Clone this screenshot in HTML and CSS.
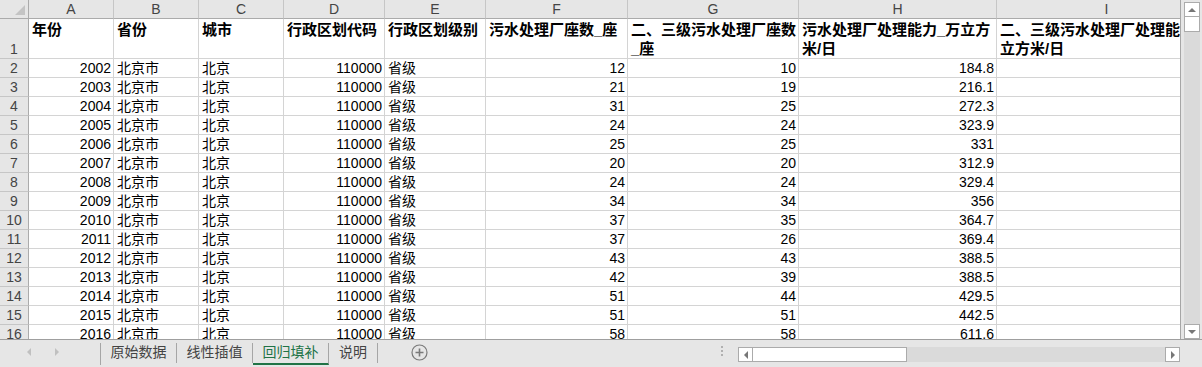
FILE: index.html
```html
<!DOCTYPE html>
<html lang="zh-CN">
<head>
<meta charset="utf-8">
<title>Sheet</title>
<link rel="stylesheet" href="styles.css">
</head>
<body>
<div class="app">
  <div class="main">
    <div class="sheet">
      <div class="grid">
        <div class="c corner"></div>
        <div class="c ch">A</div><div class="c ch">B</div><div class="c ch">C</div><div class="c ch">D</div><div class="c ch">E</div><div class="c ch">F</div><div class="c ch">G</div><div class="c ch">H</div><div class="c ch">I</div>

        <div class="c rh rh1">1</div>
        <div class="c hd">年份</div><div class="c hd">省份</div><div class="c hd">城市</div><div class="c hd">行政区划代码</div><div class="c hd">行政区划级别</div><div class="c hd">污水处理厂座数_座</div><div class="c hd">二、三级污水处理厂座数<br>_座</div><div class="c hd">污水处理厂处理能力_万立方<br>米/日</div><div class="c hd">二、三级污水处理厂处理能力_万<br>立方米/日</div>

        <div class="c rh">2</div><div class="c n">2002</div><div class="c">北京市</div><div class="c">北京</div><div class="c n">110000</div><div class="c">省级</div><div class="c n">12</div><div class="c n">10</div><div class="c n">184.8</div><div class="c"></div>
        <div class="c rh">3</div><div class="c n">2003</div><div class="c">北京市</div><div class="c">北京</div><div class="c n">110000</div><div class="c">省级</div><div class="c n">21</div><div class="c n">19</div><div class="c n">216.1</div><div class="c"></div>
        <div class="c rh">4</div><div class="c n">2004</div><div class="c">北京市</div><div class="c">北京</div><div class="c n">110000</div><div class="c">省级</div><div class="c n">31</div><div class="c n">25</div><div class="c n">272.3</div><div class="c"></div>
        <div class="c rh">5</div><div class="c n">2005</div><div class="c">北京市</div><div class="c">北京</div><div class="c n">110000</div><div class="c">省级</div><div class="c n">24</div><div class="c n">24</div><div class="c n">323.9</div><div class="c"></div>
        <div class="c rh">6</div><div class="c n">2006</div><div class="c">北京市</div><div class="c">北京</div><div class="c n">110000</div><div class="c">省级</div><div class="c n">25</div><div class="c n">25</div><div class="c n">331</div><div class="c"></div>
        <div class="c rh">7</div><div class="c n">2007</div><div class="c">北京市</div><div class="c">北京</div><div class="c n">110000</div><div class="c">省级</div><div class="c n">20</div><div class="c n">20</div><div class="c n">312.9</div><div class="c"></div>
        <div class="c rh">8</div><div class="c n">2008</div><div class="c">北京市</div><div class="c">北京</div><div class="c n">110000</div><div class="c">省级</div><div class="c n">24</div><div class="c n">24</div><div class="c n">329.4</div><div class="c"></div>
        <div class="c rh">9</div><div class="c n">2009</div><div class="c">北京市</div><div class="c">北京</div><div class="c n">110000</div><div class="c">省级</div><div class="c n">34</div><div class="c n">34</div><div class="c n">356</div><div class="c"></div>
        <div class="c rh">10</div><div class="c n">2010</div><div class="c">北京市</div><div class="c">北京</div><div class="c n">110000</div><div class="c">省级</div><div class="c n">37</div><div class="c n">35</div><div class="c n">364.7</div><div class="c"></div>
        <div class="c rh">11</div><div class="c n">2011</div><div class="c">北京市</div><div class="c">北京</div><div class="c n">110000</div><div class="c">省级</div><div class="c n">37</div><div class="c n">26</div><div class="c n">369.4</div><div class="c"></div>
        <div class="c rh">12</div><div class="c n">2012</div><div class="c">北京市</div><div class="c">北京</div><div class="c n">110000</div><div class="c">省级</div><div class="c n">43</div><div class="c n">43</div><div class="c n">388.5</div><div class="c"></div>
        <div class="c rh">13</div><div class="c n">2013</div><div class="c">北京市</div><div class="c">北京</div><div class="c n">110000</div><div class="c">省级</div><div class="c n">42</div><div class="c n">39</div><div class="c n">388.5</div><div class="c"></div>
        <div class="c rh">14</div><div class="c n">2014</div><div class="c">北京市</div><div class="c">北京</div><div class="c n">110000</div><div class="c">省级</div><div class="c n">51</div><div class="c n">44</div><div class="c n">429.5</div><div class="c"></div>
        <div class="c rh">15</div><div class="c n">2015</div><div class="c">北京市</div><div class="c">北京</div><div class="c n">110000</div><div class="c">省级</div><div class="c n">51</div><div class="c n">51</div><div class="c n">442.5</div><div class="c"></div>
        <div class="c rh">16</div><div class="c n">2016</div><div class="c">北京市</div><div class="c">北京</div><div class="c n">110000</div><div class="c">省级</div><div class="c n">58</div><div class="c n">58</div><div class="c n">611.6</div><div class="c"></div>
      </div>
    </div>
    <div class="vscroll">
      <div class="sbtn up"><span class="tri-up"></span></div>
      <div class="vthumb"></div>
      <div class="vtrack"></div>
      <div class="sbtn down"><span class="tri-down"></span></div>
    </div>
  </div>
  <div class="tabbar">
    <div class="nav">
      <span class="tri-left"></span>
      <span class="tri-right"></span>
    </div>
    <div class="tabs">
      <div class="tab">原始数据</div>
      <div class="tab">线性插值</div>
      <div class="tab active">回归填补</div>
      <div class="tab short">说明</div>
    </div>
    <div class="add">
      <svg width="17" height="17" viewBox="0 0 17 17"><circle cx="8.5" cy="8.5" r="7.5" fill="none" stroke="#7a7a7a" stroke-width="1.2"/><path d="M8.5 4.5v8M4.5 8.5h8" stroke="#7a7a7a" stroke-width="1.6"/></svg>
    </div>
    <div class="spacer"></div>
    <div class="dots"><i></i><i></i><i></i></div>
    <div class="hscroll">
      <div class="hbtn"><span class="tri-left dark"></span></div>
      <div class="hthumb"></div>
      <div class="htrack"></div>
      <div class="hbtn"><span class="tri-right dark"></span></div>
    </div>
  </div>
</div>
</body>
</html>
```

FILE: styles.css
```css
html, body {
  margin: 0;
  padding: 0;
}
body {
  width: 1202px;
  height: 367px;
  overflow: hidden;
  background: #e6e6e6;
  font-family: "Liberation Sans", "Noto Sans CJK SC", sans-serif;
  font-size: 14px;
  color: #000;
}
.app {
  display: flex;
  flex-direction: column;
  width: 1202px;
  height: 367px;
}
.main {
  display: flex;
  height: 339px;
}
.sheet {
  width: 1180px;
  height: 339px;
  overflow: hidden;
  background: #fff;
  border-right: 1px solid #a6a6a6;
}
.grid {
  display: grid;
  grid-template-columns: 29px 85px 85px 85px 101px 101px 142px 171px 198px 220px;
  grid-template-rows: 19px 40px repeat(15, 19px);
}
.c {
  box-sizing: border-box;
  border-right: 1px solid #d4d4d4;
  border-bottom: 1px solid #d4d4d4;
  line-height: 18px;
  padding: 0 3px;
  white-space: nowrap;
  overflow: hidden;
}
.n {
  text-align: right;
  padding: 0 2px 0 0;
}
.ch {
  background: #e6e6e6;
  color: #444;
  text-align: center;
  border-right-color: #c6c6c6;
  border-bottom-color: #ababab;
}
.rh {
  background: #e6e6e6;
  color: #444;
  text-align: center;
  padding: 0;
  border-right-color: #ababab;
  border-bottom-color: #c6c6c6;
}
.rh1 {
  display: flex;
  align-items: flex-end;
  justify-content: center;
}
.corner {
  background: #e6e6e6;
  border-right-color: #ababab;
  border-bottom-color: #ababab;
  display: flex;
  justify-content: flex-end;
  align-items: flex-end;
  padding: 0 3px 3px 0;
}
.corner::after {
  content: "";
  width: 0;
  height: 0;
  border-left: 10px solid transparent;
  border-bottom: 10px solid #c4c4c4;
}
.hd {
  font-weight: bold;
  font-size: 15px;
  line-height: 19px;
  padding-top: 1px;
  padding-left: 3px;
}

/* vertical scrollbar */
.vscroll {
  width: 21px;
  display: flex;
  flex-direction: column;
  box-sizing: border-box;
  padding: 2px 2px 0 3px;
  background: #e6e6e6;
}
.sbtn {
  height: 15px;
  box-sizing: border-box;
  background: #fff;
  border: 1px solid #ababab;
  display: flex;
  align-items: center;
  justify-content: center;
}
.vthumb {
  height: 15px;
  box-sizing: border-box;
  background: #fff;
  border: 1px solid #ababab;
  border-top: none;
}
.vtrack {
  flex: 1;
  background: #dadada;
}
.down {
  height: 15px;
}
.tri-up {
  width: 0; height: 0;
  border-left: 4px solid transparent;
  border-right: 4px solid transparent;
  border-bottom: 4px solid #777;
}
.tri-down {
  width: 0; height: 0;
  border-left: 4px solid transparent;
  border-right: 4px solid transparent;
  border-top: 4px solid #777;
}
.tri-left {
  width: 0; height: 0;
  border-top: 4px solid transparent;
  border-bottom: 4px solid transparent;
  border-right: 4px solid #c0c0c0;
}
.tri-right {
  width: 0; height: 0;
  border-top: 4px solid transparent;
  border-bottom: 4px solid transparent;
  border-left: 4px solid #c0c0c0;
}
.tri-left.dark { border-right-color: #777; }
.tri-right.dark { border-left-color: #777; }

/* tab bar */
.tabbar {
  height: 28px;
  box-sizing: border-box;
  border-top: 1px solid #9f9f9f;
  display: flex;
  align-items: flex-start;
  background: #e6e6e6;
}
.nav {
  width: 100px;
  height: 24px;
  display: flex;
  align-items: center;
  gap: 24px;
  box-sizing: border-box;
  padding-left: 27px;
  margin-top: 0;
}
.tabs {
  display: flex;
  margin-top: 3px;
  border-left: 1px solid #a6a6a6;
}
.tab {
  width: 76px;
  height: 20px;
  box-sizing: border-box;
  border-right: 1px solid #a6a6a6;
  text-align: center;
  line-height: 19px;
  color: #444;
  font-size: 14px;
}
.tab.short {
  width: 49px;
}
.tab.active {
  color: #217346;
  height: 22px;
  border-bottom: 2px solid #217346;
}
.add {
  margin-left: 33px;
  margin-top: 4px;
  width: 17px;
  height: 17px;
}
.add svg { display: block; }
.spacer { flex: 1; }
.dots {
  width: 4px;
  margin-top: 6px;
  margin-right: 14px;
  display: flex;
  flex-direction: column;
  gap: 2px;
  align-items: center;
}
.dots i {
  display: block;
  width: 2px;
  height: 2px;
  background: #b0b0b0;
}
.hscroll {
  display: flex;
  width: 442px;
  height: 15px;
  margin-top: 7px;
  margin-right: 22px;
}
.hbtn {
  width: 15px;
  height: 15px;
  box-sizing: border-box;
  background: #fff;
  border: 1px solid #ababab;
  display: flex;
  align-items: center;
  justify-content: center;
}
.hthumb {
  width: 154px;
  box-sizing: border-box;
  background: #fff;
  border: 1px solid #ababab;
  border-left: none;
}
.htrack {
  flex: 1;
  background: #dadada;
}
```
